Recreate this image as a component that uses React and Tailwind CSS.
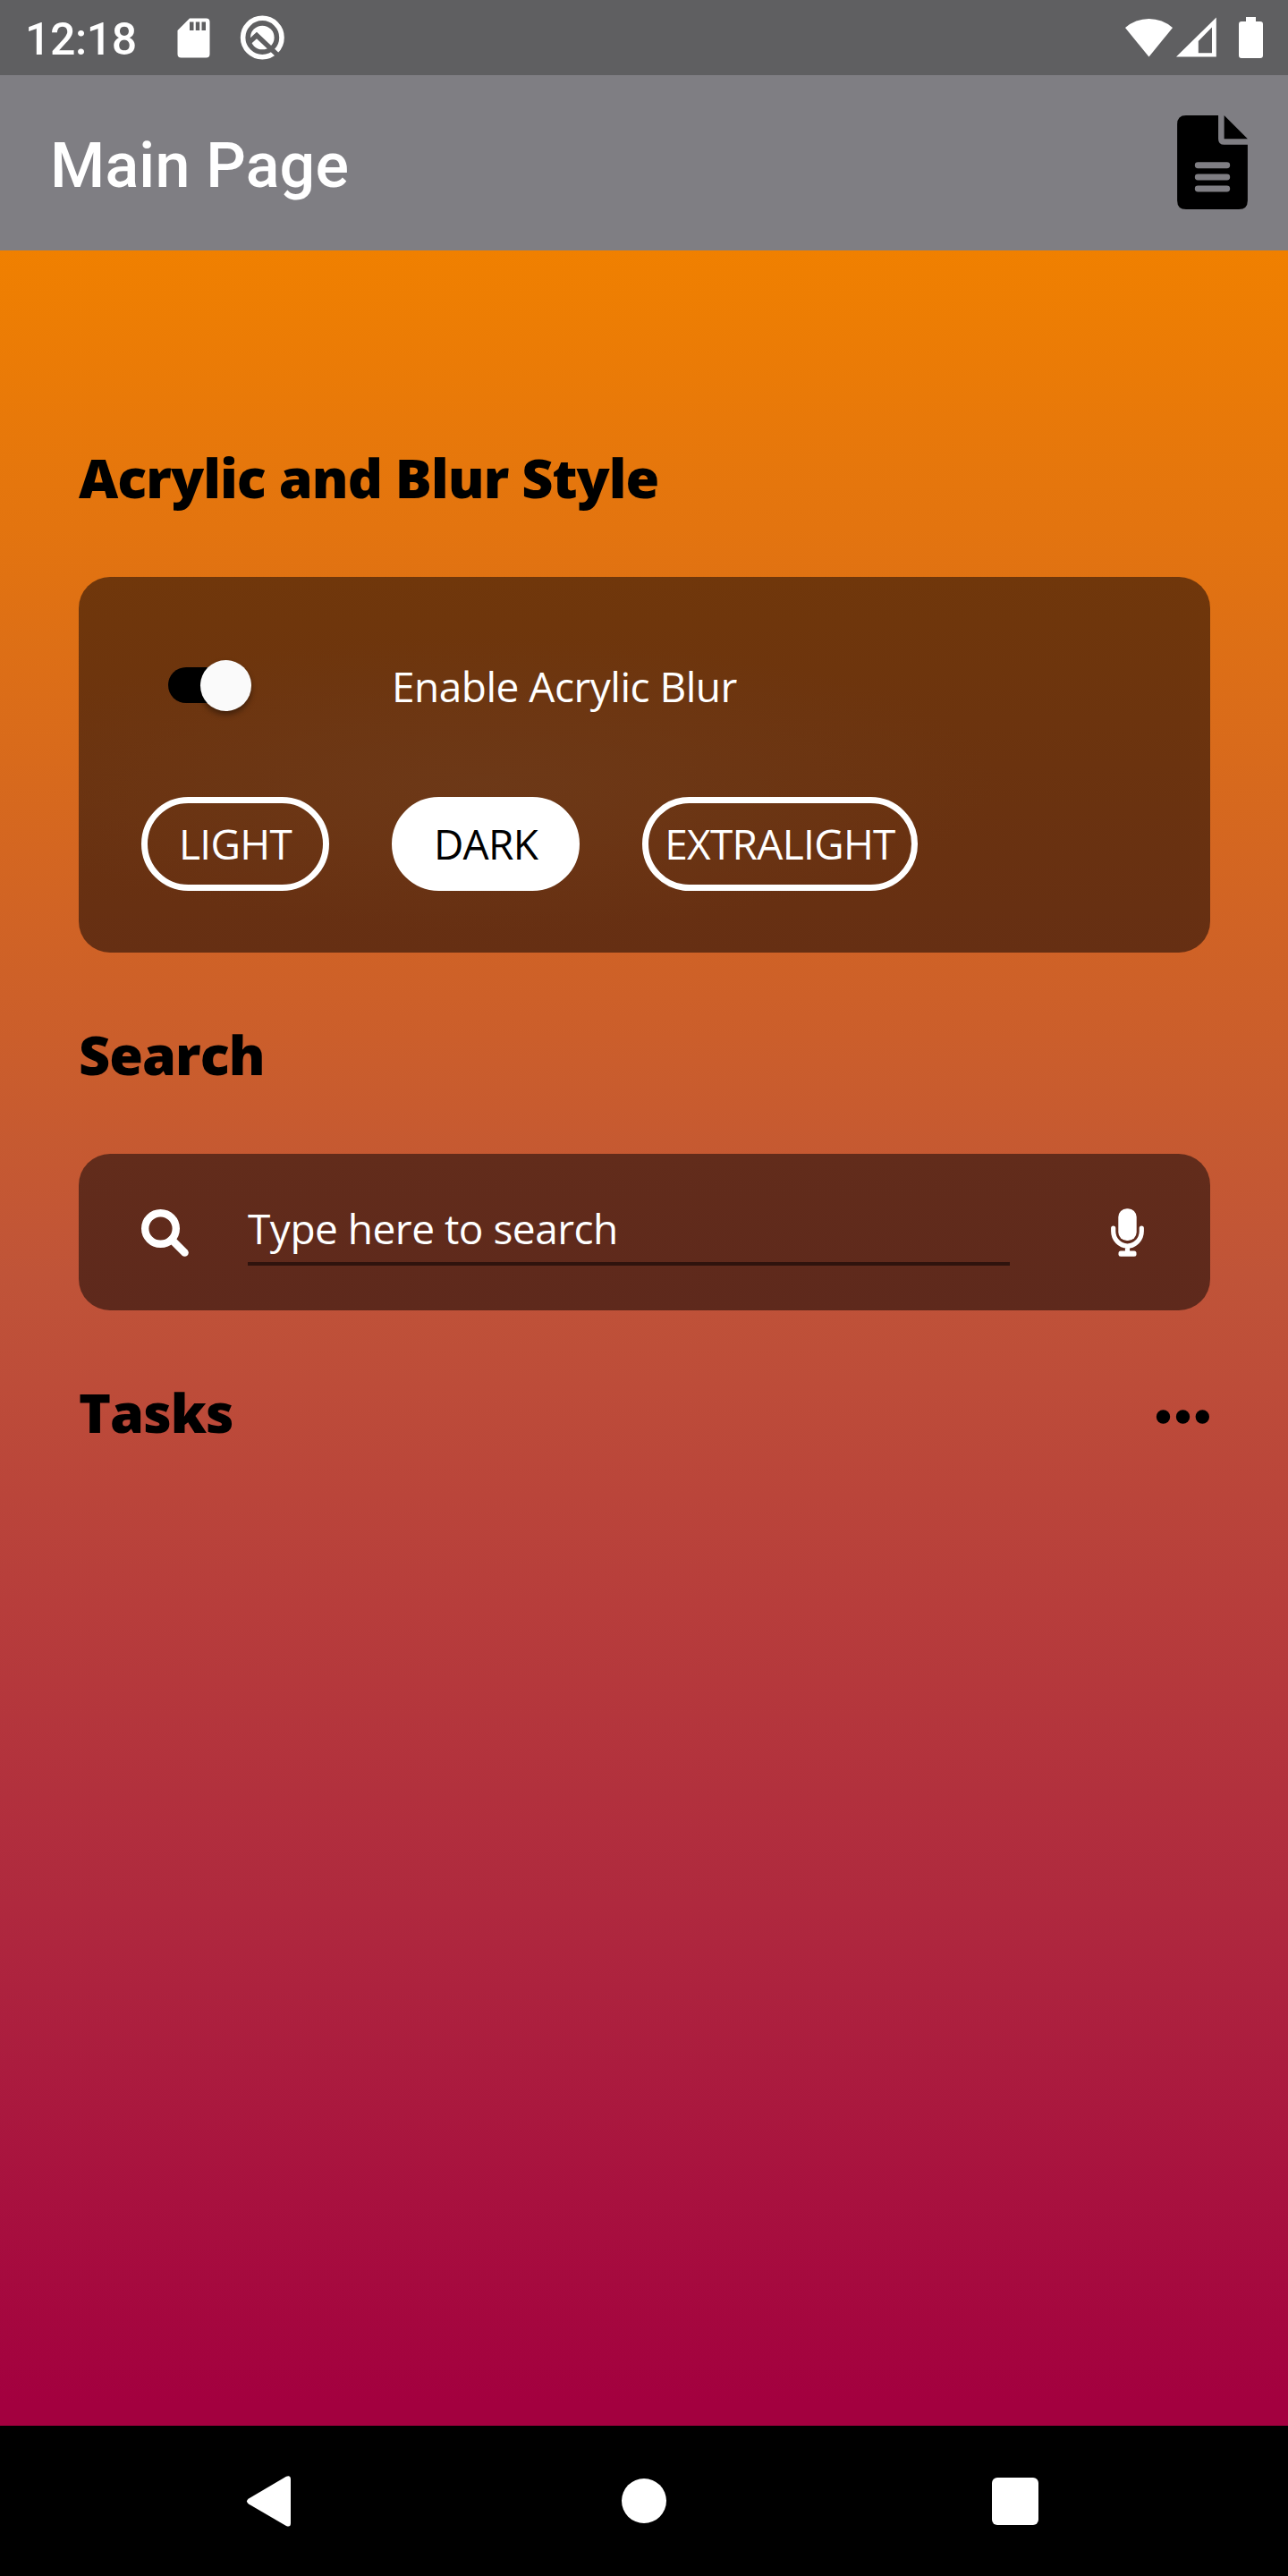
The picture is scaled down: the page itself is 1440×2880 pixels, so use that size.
const StatusIcon = ({ children, w, h, className = "" }) => (
  <svg width={w} height={h} viewBox={`0 0 ${w} ${h}`} className={`block shrink-0 ${className}`}>
    {children}
  </svg>
);

function StatusBar() {
  return (
    <div className="flex h-[84px] items-start bg-[#5f5f61] text-white">
      <span className="ml-[28px] mt-[14px] w-[124px] whitespace-nowrap font-[Roboto] text-[50px] leading-[60px] font-medium tracking-[-0.4px]">12:18</span>
      <StatusIcon w={37} h={45} className="ml-[46px] mt-[20px]">
        <path fillRule="evenodd" fill="#fff" d="M14 .5H32.500Q36.500.5 36.500 4.500V40.500Q36.500 44.500 32.500 44.500H4.500Q.5 44.500.5 40.500V14ZM14 4.500V14H18.500V4.500ZM20.800 4.500V14H25.200V4.500ZM27.500 4.500V14H32V4.500Z" />
      </StatusIcon>
      <StatusIcon w={50} h={51} className="ml-[33px] mt-[17px]">
        <circle cx="25.300" cy="25" r="21.700" fill="none" stroke="#fff" strokeWidth="5.600" />
        <circle cx="25.300" cy="25" r="13.300" fill="#fff" />
        <path d="M9 31.800L19 22.500L46 48" fill="none" stroke="#5f5f61" strokeWidth="5.500" />
      </StatusIcon>
      <StatusIcon w={54} h={46} className="ml-auto mt-[18px]">
        <path d="M0 13A40 40 0 0 1 53 13L26.500 45.500Z" fill="#fff" />
      </StatusIcon>
      <StatusIcon w={46} h={45} className="ml-[3px] mt-[19px]">
        <path d="M0 44.500L44.800 .5V44.500ZM24.800 27V40.300H40V11.500Z" fillRule="evenodd" fill="#fff" />
      </StatusIcon>
      <StatusIcon w={27} h={46} className="ml-[24px] mr-[28px] mt-[19px]">
        <path d="M8 0H19V5H24Q27 5 27 8V43Q27 46 24 46H3Q0 46 0 43V8Q0 5 3 5H8Z" fill="#fff" />
      </StatusIcon>
    </div>
  );
}

function AppBar() {
  return (
    <header className="flex h-[196px] items-start justify-between bg-[#7f7e83]">
      <h1 className="ml-[56px] mt-[60px] whitespace-nowrap font-[Roboto] text-[70px] leading-[82px] font-medium tracking-[0.2px] text-white">Main Page</h1>
      <svg viewBox="0 0 384 512" width="79" height="105" className="mr-[45px] mt-[45px] block">
        <path fillRule="evenodd" d="M48 0H224V128Q224 160 256 160H384V464Q384 512 336 512H48Q0 512 0 464V48Q0 0 48 0ZM113 255A17 17 0 0 0 113 289H271A17 17 0 0 0 271 255ZM113 319A17 17 0 0 0 113 353H271A17 17 0 0 0 271 319ZM113 383A17 17 0 0 0 113 417H271A17 17 0 0 0 271 383ZM256 0L384 128H256Z" />
      </svg>
    </header>
  );
}

const Heading = ({ children }) => (
  <h2 className="whitespace-nowrap font-['Open_Sans'] text-[61px] leading-[84px] font-extrabold tracking-[-0.95px] text-black">{children}</h2>
);

function Choice({ label, width, active }) {
  return (
    <button
      className={`flex h-[105px] shrink-0 items-center justify-center whitespace-nowrap rounded-full border-[7px] border-white tracking-[-0.7px] ${active ? "bg-white text-black" : "text-white"}`}
      style={{ width }}
    >
      {label}
    </button>
  );
}

export default function App() {
  return (
    <div className="flex h-[2880px] w-[1440px] flex-col overflow-hidden">
      <StatusBar />
      <AppBar />
      <main className="flex h-[2432px] flex-col bg-[linear-gradient(to_bottom,#f08000_0%,#c05438_47%,#af293e_76%,#a3003f_99%)] pr-[87px] pl-[88px] font-['Open_Sans'] text-[46px]">
        <div className="mt-[212px]"><Heading>Acrylic and Blur Style</Heading></div>

        <section className="mt-[69px] h-[420px] rounded-[35px] bg-[radial-gradient(ellipse_at_36%_55%,#6e3b1bb0_0%,#6e3b1b00_50%),linear-gradient(to_bottom,#70370b,#662f13)] px-[70px]">
          <div className="flex h-[246px] items-center pb-[2px]">
            <div className="relative ml-[30px] h-[40px] w-[92px] -translate-y-[1px] rounded-full bg-black">
              <div className="absolute -top-[8px] left-[36px] size-[57px] rounded-full bg-[#fafafa] shadow-[0_4px_6px_rgba(0,0,0,0.4)]" />
            </div>
            <span className="ml-[158px] whitespace-nowrap tracking-[-0.5px] text-white">Enable Acrylic Blur</span>
          </div>
          <div className="flex gap-[70px]">
            <Choice label="LIGHT" width={210} />
            <Choice label="DARK" width={210} active />
            <Choice label="EXTRALIGHT" width={308} />
          </div>
        </section>

        <div className="mt-[72px]"><Heading>Search</Heading></div>

        <section className="mt-[69px] flex h-[175px] items-start rounded-[35px] bg-[linear-gradient(to_bottom,#622c1b,#5e291c)] text-white">
          <svg viewBox="0 0 53 53" width="53" height="53" className="ml-[70px] mt-[62px] block shrink-0">
            <circle cx="21.500" cy="21.500" r="17.300" fill="none" stroke="#fff" strokeWidth="8.400" />
            <path d="M34 34L48.500 48.500" stroke="#fff" strokeWidth="8.600" strokeLinecap="round" />
          </svg>
          <div className="ml-[66px] mt-[48px] h-[77px] w-[852px] border-b-[4px] border-[#2f130d] leading-[71px] tracking-[-0.5px]">Type here to search</div>
          <svg viewBox="0 0 37 54" width="37" height="54" className="ml-[113px] mt-[61px] block shrink-0">
            <rect x="8.300" y="0.300" width="20.400" height="35.700" rx="9.500" fill="#fff" />
            <path d="M2.700 22V25.500A15.800 16.500 0 0 0 34.300 25.500V22M18.500 42V50" fill="none" stroke="#fff" strokeWidth="5.200" strokeLinecap="round" />
            <rect x="8.500" y="47.500" width="20" height="6.200" rx="2.500" fill="#fff" />
          </svg>
        </section>

        <div className="mt-[72px] flex items-start justify-between">
          <Heading>Tasks</Heading>
          <svg viewBox="0 0 60 16" width="60" height="16" className="mt-[39px] mr-[1px] block">
            <circle cx="8.500" cy="8" r="7.700" />
            <circle cx="30.500" cy="8" r="7.700" />
            <circle cx="52.300" cy="8" r="7.700" />
          </svg>
        </div>
      </main>
      <nav className="flex h-[168px] items-center bg-black pl-[275px]">
        <svg viewBox="0 0 50 57" width="50" height="57" className="block">
          <path d="M45 .8Q50-1 50 4V53Q50 58 45 56L3 31.500Q-1 28.500 3 25.500Z" fill="#fff" />
        </svg>
        <div className="ml-[370px] size-[50px] rounded-full bg-white" />
        <div className="ml-[364px] h-[53px] w-[52px] rounded-[6px] bg-white" />
      </nav>
    </div>
  );
}
